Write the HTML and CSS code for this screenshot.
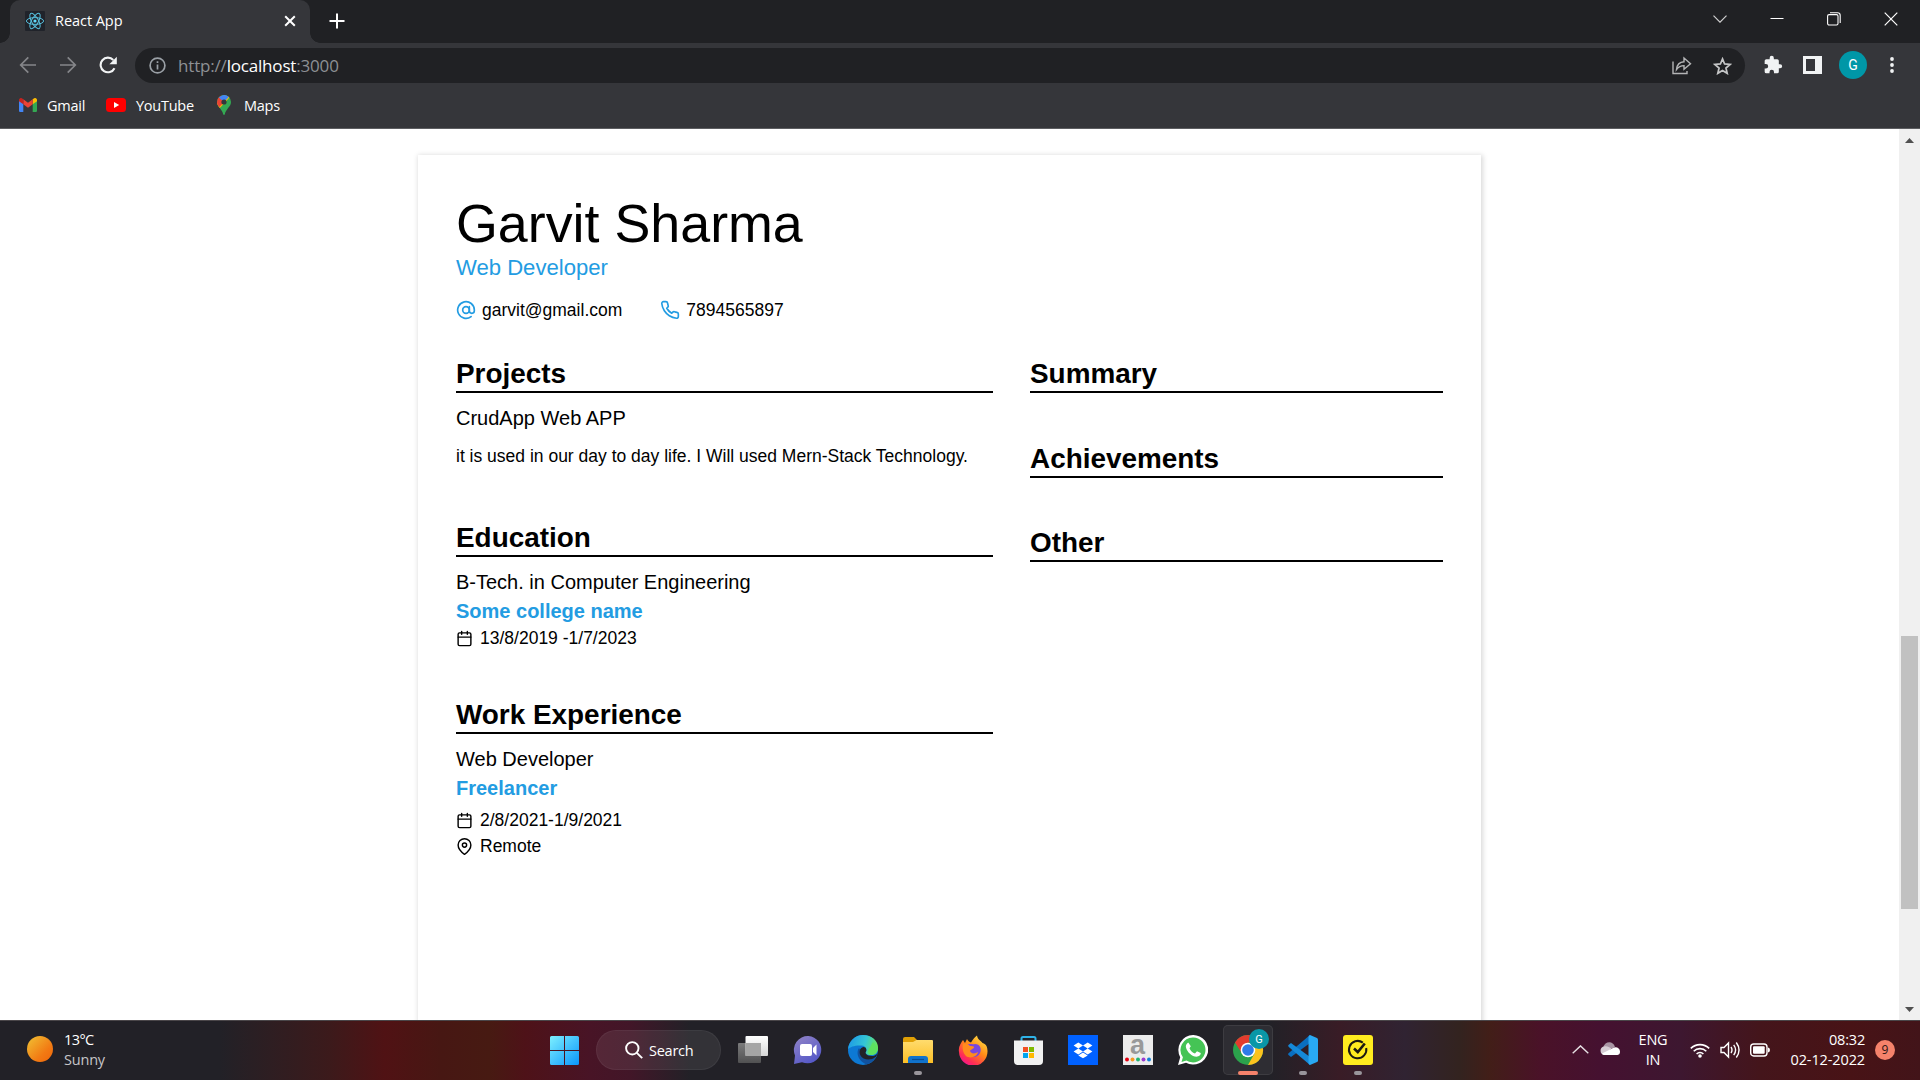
FILE: index.html
```html
<!DOCTYPE html>
<html lang="en">
<head>
<meta charset="utf-8">
<title>React App</title>
<link rel="stylesheet" href="styles.css">
</head>
<body>
<div class="screen">
  <header class="browser">
    <div class="tabstrip">
      <div class="tab">
        <svg class="favicon" width="20" height="20" viewBox="0 0 20 20" fill="none" stroke="#61dafb" stroke-width="1"><rect width="20" height="20" rx="1" fill="#20232a" stroke="none"/><g opacity=".85"><ellipse cx="10" cy="10" rx="8.6" ry="3.4"/><ellipse cx="10" cy="10" rx="8.6" ry="3.4" transform="rotate(60 10 10)"/><ellipse cx="10" cy="10" rx="8.6" ry="3.4" transform="rotate(120 10 10)"/></g><circle cx="10" cy="10" r="1.6" fill="#61dafb" stroke="none"/></svg>
        <span class="tab-title">React App</span>
        <svg class="tab-close" width="12" height="12" viewBox="0 0 12 12" stroke="#fff" stroke-width="2"><path d="M1.2 1.2l9.6 9.6M10.8 1.2l-9.6 9.6"/></svg>
      </div>
      <svg class="new-tab" width="16" height="16" viewBox="0 0 16 16" stroke="#fff" stroke-width="2"><path d="M8 .5v15M.5 8h15"/></svg>
      <div class="window-buttons">
        <svg width="14" height="8" viewBox="0 0 14 8" fill="none" stroke="#cfcfd0" stroke-width="1.2"><path d="M.5.7L7 7.2 13.500.7"/></svg>
        <svg width="14" height="14" viewBox="0 0 14 14" stroke="#fff"><path d="M.5 6.500h13"/></svg>
        <svg width="14" height="14" viewBox="0 0 14 14" fill="none" stroke="#fff" stroke-width="1.100"><rect x=".6" y="2.600" width="10.400" height="10.400" rx="1.500"/><path d="M3 .8h7.500a2.700 2.700 0 0 1 2.700 2.700V11"/></svg>
        <svg width="14" height="14" viewBox="0 0 14 14" stroke="#fff" stroke-width="1.200"><path d="M.7.7l12.600 12.600M13.300.7L.7 13.300"/></svg>
      </div>
    </div>
    <div class="toolbar">
      <svg class="nav-icon" width="18" height="18" viewBox="0 0 18 18" fill="none" stroke="#85868a" stroke-width="1.700"><path d="M17 9H2M9.300 1.400L1.700 9l7.600 7.600"/></svg>
      <svg class="nav-icon" width="18" height="18" viewBox="0 0 18 18" fill="none" stroke="#85868a" stroke-width="1.700"><path d="M1 9h15M8.700 1.400L16.300 9l-7.600 7.600"/></svg>
      <svg class="nav-icon" width="18" height="18" viewBox="0 0 18 18"><path d="M15.500 12.200A7.300 7.300 0 1 1 14.300 4" fill="none" stroke="#f1f3f4" stroke-width="2.100"/><path d="M17.800.8v7.400h-7.400z" fill="#f1f3f4"/></svg>
      <div class="omnibox">
        <svg width="17" height="17" viewBox="0 0 17 17" fill="none" stroke="#9aa0a6" stroke-width="1.700"><circle cx="8.500" cy="8.500" r="7.400"/><path d="M8.500 7.500v5M8.500 4.300v1.700"/></svg>
        <span class="url">http://<b>localhost</b>:3000</span>
        <svg class="share" width="20" height="19" viewBox="0 0 20 19" fill="none" stroke="#b4b5b6" stroke-width="1.400"><path d="M1 5.500v12h14V15"/><path d="M4.500 13.500c.5-5 3.500-7.500 7.500-7.700V2l6.500 5.700-6.500 5.500V9.600c-3.500 0-5.500 1.200-7.500 3.900z"/></svg>
        <svg width="19" height="18" viewBox="0 0 24 23" fill="none" stroke="#c5c6c7" stroke-width="2.200"><path d="M12 2.500l2.700 6.400 7 .6-5.300 4.600 1.600 6.800-6-3.600-6 3.600 1.600-6.800-5.300-4.600 7-.6z"/></svg>
      </div>
      <svg class="puzzle" width="20" height="20" viewBox="0 0 24 24" fill="#f1f3f4"><path d="M20.500 11H19V7a2 2 0 0 0-2-2h-4V3.500a2.500 2.500 0 0 0-5 0V5H4a2 2 0 0 0-2 2v3.800h1.500a2.700 2.700 0 0 1 0 5.400H2V20a2 2 0 0 0 2 2h3.800v-1.500a2.700 2.700 0 0 1 5.400 0V22H17a2 2 0 0 0 2-2v-4h1.500a2.500 2.500 0 0 0 0-5z"/></svg>
      <svg class="panel" width="19" height="18" viewBox="0 0 19 18"><path d="M0 0h19v18H0zM3 3v12h9V3z" fill="#f1f3f4" fill-rule="evenodd"/></svg>
      <span class="avatar">G</span>
      <svg class="dots" width="4" height="16" viewBox="0 0 4 16" fill="#f1f3f4"><circle cx="2" cy="2" r="1.900"/><circle cx="2" cy="8" r="1.900"/><circle cx="2" cy="14" r="1.900"/></svg>
    </div>
    <nav class="bookmarks">
      <span class="bookmark gmail"><svg width="18" height="14" viewBox="0 0 18 14"><path d="M0 2v10.700C0 13.400.6 14 1.300 14h3V5z" fill="#4285f4"/><path d="M13.700 5v9h3c.7 0 1.300-.6 1.300-1.300V2z" fill="#34a853"/><path d="M13.700 1.300v5L18 3.200V2c0-1.700-1.900-2.600-3.200-1.600z" fill="#fbbc04"/><path d="M4.300 6.300v-5L9 4.800l4.700-3.500v5L9 9.800z" fill="#ea4335"/><path d="M0 2v1.200l4.300 3.100v-5L3.200.4C1.900-.6 0 .3 0 2z" fill="#c5221f"/></svg>Gmail</span>
      <span class="bookmark youtube"><svg width="20" height="14" viewBox="0 0 20 14"><rect width="20" height="14" rx="3.500" fill="#f00"/><path d="M8 4v6l5.200-3z" fill="#fff"/></svg>YouTube</span>
      <span class="bookmark maps"><svg width="14" height="20" viewBox="0 0 14 20"><defs><clipPath id="pin"><path d="M7 0a7 7 0 0 1 7 7c0 5-5 6.500-6.200 12.300-.2.900-1.400.9-1.600 0C5 13.500 0 12 0 7a7 7 0 0 1 7-7z"/></clipPath></defs><g clip-path="url(#pin)"><path d="M0 0h14v20H0z" fill="#34a853"/><path d="M1 15L13 2 7 0 0 8z" fill="#fbbc04"/><path d="M0 9.500V0h4L7 7l-4.500 5z" fill="#ea4335"/><path d="M1.800 2.500L7 7l5.700-6L7-1z" fill="#4285f4"/></g><circle cx="7" cy="7" r="2.600" fill="#35363a"/></svg>Maps</span>
    </nav>
  </header>

  <main class="viewport">
    <div class="page">
      <article class="resume">
        <h1>Garvit Sharma</h1>
        <p class="role">Web Developer</p>
        <div class="contacts">
          <span class="contact"><svg class="feather" width="20" height="20" viewBox="0 0 24 24"><circle cx="12" cy="12" r="4"/><path d="M16 8v5a3 3 0 0 0 6 0v-1a10 10 0 1 0-3.920 7.940"/></svg>garvit@gmail.com</span>
          <span class="contact"><svg class="feather" width="20" height="20" viewBox="0 0 24 24"><path d="M22 16.920v3a2 2 0 0 1-2.180 2 19.790 19.790 0 0 1-8.630-3.070 19.500 19.500 0 0 1-6-6 19.790 19.790 0 0 1-3.070-8.670A2 2 0 0 1 4.110 2h3a2 2 0 0 1 2 1.720 12.840 12.840 0 0 0 .7 2.810 2 2 0 0 1-.45 2.110L8.090 9.910a16 16 0 0 0 6 6l1.270-1.270a2 2 0 0 1 2.110-.45 12.840 12.840 0 0 0 2.810.7A2 2 0 0 1 22 16.920z"/></svg>7894565897</span>
        </div>
        <div class="columns">
          <div class="main-column">
            <section class="projects">
              <h2>Projects</h2>
              <p class="item-title">CrudApp Web APP</p>
              <p class="overview">it is used in our day to day life. I Will used Mern-Stack Technology.</p>
            </section>
            <section class="education">
              <h2>Education</h2>
              <p class="item-title">B-Tech. in Computer Engineering</p>
              <p class="subtitle">Some college name</p>
              <p class="detail"><svg class="feather" width="17" height="17" viewBox="0 0 24 24"><rect x="3" y="4" width="18" height="18" rx="2"/><path d="M16 2v4M8 2v4M3 10h18"/></svg>13/8/2019 -1/7/2023</p>
            </section>
            <section class="work">
              <h2>Work Experience</h2>
              <p class="item-title">Web Developer</p>
              <p class="subtitle">Freelancer</p>
              <p class="detail"><svg class="feather" width="17" height="17" viewBox="0 0 24 24"><rect x="3" y="4" width="18" height="18" rx="2"/><path d="M16 2v4M8 2v4M3 10h18"/></svg>2/8/2021-1/9/2021</p>
              <p class="detail"><svg class="feather" width="17" height="17" viewBox="0 0 24 24"><path d="M21 10c0 7-9 13-9 13s-9-6-9-13a9 9 0 0 1 18 0z"/><circle cx="12" cy="10" r="3"/></svg>Remote</p>
            </section>
          </div>
          <div class="side-column">
            <section><h2>Summary</h2></section>
            <section><h2>Achievements</h2></section>
            <section><h2>Other</h2></section>
          </div>
        </div>
      </article>
    </div>
    <div class="scrollbar">
      <svg width="9" height="5" viewBox="0 0 9 5"><path d="M4.500 0L9 5H0z" fill="#505050"/></svg>
      <div class="track"><div class="thumb"></div></div>
      <svg width="9" height="5" viewBox="0 0 9 5"><path d="M4.500 5L9 0H0z" fill="#505050"/></svg>
    </div>
  </main>

  <footer class="taskbar">
    <div class="weather">
      <span class="sun"></span>
      <div class="lines"><span>13°C</span><span class="dim">Sunny</span></div>
    </div>
    <div class="apps">
      <svg class="start" width="29" height="29" viewBox="0 0 29 29"><defs><linearGradient id="win" x1="0" y1="0" x2="1" y2="1"><stop offset="0" stop-color="#7df0ff"/><stop offset="1" stop-color="#0a95fb"/></linearGradient></defs><path d="M0 1.500Q0 0 1.500 0H14v14H0zM15 0h12.500Q29 0 29 1.500V14H15zM0 15h14v14H1.500Q0 29 0 27.500zM15 15h14v12.500q0 1.500-1.500 1.500H15z" fill="url(#win)"/></svg>
      <div class="search"><svg width="18" height="18" viewBox="0 0 18 18" fill="none" stroke="#fff" stroke-width="1.900"><circle cx="7.300" cy="7.300" r="6.200"/><path d="M11.800 11.800l5.400 5.400"/></svg>Search</div>
      <span class="app"><svg width="30" height="30" viewBox="0 0 30 30"><defs><linearGradient id="tv" x1="0" y1="0" x2="0" y2="1"><stop offset="0" stop-color="#fff"/><stop offset="1" stop-color="#d6d6d6"/></linearGradient><linearGradient id="tg" x1="0" y1="0" x2="0" y2="1"><stop offset="0" stop-color="#7b7b7c"/><stop offset="1" stop-color="#515152"/></linearGradient></defs><rect y="8" width="23" height="20" rx="1" fill="url(#tg)"/><rect x="7.500" y="1" width="22.500" height="20" rx="1" fill="url(#tv)"/><path d="M7.500 8H23v13H7.500z" fill="#a5a5a5"/></svg></span>
      <span class="app"><svg width="30" height="30" viewBox="0 0 30 30"><defs><linearGradient id="chat" x1="0" y1="0" x2=".6" y2="1"><stop offset="0" stop-color="#9385c6"/><stop offset="1" stop-color="#5558c8"/></linearGradient></defs><path d="M15.500 1A13.700 13.700 0 1 1 9 27.200L1 29l1-8.500A14 14 0 0 1 15.500 1z" fill="url(#chat)"/><rect x="7" y="9" width="12" height="12" rx="2" fill="#fff"/><path d="M20 13l3.500-3.500v11L20 17z" fill="#fff"/></svg></span>
      <span class="app"><svg width="30" height="30" viewBox="0 0 30 30"><defs><linearGradient id="edge" x1="0" y1=".4" x2="1" y2=".6"><stop offset="0" stop-color="#1e9be6"/><stop offset=".55" stop-color="#35c6d4"/><stop offset="1" stop-color="#6eea4c"/></linearGradient></defs><circle cx="15" cy="15" r="15" fill="#0d79d4"/><path d="M0 14C1 6 7.500 0 15 0c9 0 15 6 15 12.500 0 5-4 7.500-7.500 7.500s-5.500-1.500-4.500-3 .9-6-4.500-6.500C7 10 2 12 0 14z" fill="url(#edge)"/><path d="M10.500 13.500C7.500 20 12 27 18.500 29.500c4-.8 7.500-4 9.300-7.500-4 2.300-9 2.300-12-.2-2.300-2-2.500-5-.8-7.300z" fill="#11529f"/><path d="M30 16c0 3-3 5-6 5s-5.200-.8-6-2.200c-1.300-1.600.6-2 .3-4.300-.3-2-2-2.700-3.600-2.300-3 1-3.800 5-2.200 8.300 2.500 4.500 10 5.500 15.300 1.500C29 20.500 30 18 30 16z" fill="#222127"/><path d="M20 15.800c0 3 2 4.500 4.500 4.200 3.500-.4 5.500-3 5.500-7l-5-6z" fill="#5de25f"/></svg></span>
      <span class="app running"><svg width="30" height="30" viewBox="0 0 30 30"><defs><linearGradient id="fold" x1="0" y1="0" x2="0" y2="1"><stop offset="0" stop-color="#ffdc6e"/><stop offset="1" stop-color="#fcbf26"/></linearGradient></defs><path d="M0 4q0-2 2-2h9l3 3v5H0z" fill="#e0a005"/><path d="M0 7h10l3.500-2H29q1 0 1 1v22H0z" fill="url(#fold)"/><path d="M5 28v-4q0-3 3-3h14q3 0 3 3v4z" fill="#1173cc"/><path d="M9 24.500h12" stroke="#0a4d92" stroke-width="1.200"/></svg></span>
      <span class="app"><svg width="30" height="30" viewBox="0 0 30 30"><defs><linearGradient id="fox" x1=".9" y1="0" x2=".2" y2="1"><stop offset="0" stop-color="#ffe94a"/><stop offset=".45" stop-color="#ff8a16"/><stop offset=".8" stop-color="#ff2c56"/><stop offset="1" stop-color="#f0119b"/></linearGradient></defs><path d="M5 5l2 3 2-4c1 2 2 3 4 3.500C15 4 17 2 19 .5c.5 4 3.500 5 5.500 7.500 4 1 5 4.500 5 8A14 14 0 0 1 1 17C0 12 3 8 5 5z" fill="url(#fox)"/><path d="M9 10c3-2 5 0 8-1 5 0 7 5 5 9-2 5-8 5-11 2-2-2-3-5-2-10z" fill="#7947dd"/><path d="M5 9c3-1 5 0 7 2 2 0 4 0 4 1 0 2-3 2-4 4 1 3 5 3 8 1-1 5-8 7-12 4C5 18 4 13 5 9z" fill="#ff8b1d"/></svg></span>
      <span class="app"><svg width="30" height="30" viewBox="0 0 30 30"><path d="M8.500 7V3.500q0-1.500 1.500-1.500h11q1.500 0 1.500 1.500V7" fill="none" stroke="#2fb3e8" stroke-width="2"/><path d="M1 5.500h29V26q0 4-4 4H5q-4 0-4-4z" fill="#f1f1f1"/><path d="M10 12h5v5h-5z" fill="#f25022"/><path d="M16 12h5v5h-5z" fill="#7fba00"/><path d="M10 18h5v5h-5z" fill="#00a4ef"/><path d="M16 18h5v5h-5z" fill="#ffb900"/></svg></span>
      <span class="app"><svg width="30" height="30" viewBox="0 0 30 30"><path d="M0 0h30v30H0z" fill="#0061ff"/><path d="M10.300 7.500l4.700 3-4.700 3-4.700-3zm9.400 0l4.700 3-4.700 3-4.700-3zM10.300 13.500l4.700 3-4.700 3-4.700-3zm9.400 0l4.700 3-4.700 3-4.700-3zM15 17.500l4.700 3-4.700 2.800-4.700-2.800z" fill="#fff"/></svg></span>
      <span class="app"><svg class="amazon" width="30" height="30" viewBox="0 0 30 30"><path d="M0 0h30v30H0z" fill="#ececec"/><text class="amazon-a" x="14.500" y="19" text-anchor="middle">a</text><circle cx="4" cy="24.500" r="2" fill="#e60012"/><circle cx="9.500" cy="24.500" r="2" fill="#f59b23"/><circle cx="15" cy="24.500" r="2" fill="#22b573"/><circle cx="20.500" cy="24.500" r="2" fill="#9a3bd0"/><circle cx="26" cy="24.500" r="2" fill="#1280d8"/></svg></span>
      <span class="app"><svg width="30" height="30" viewBox="0 0 30 30"><path d="M15 0a15 14.800 0 1 1-7 27.800L0 30l2.200-7.800A15 15 0 0 1 15 0z" fill="#fff"/><path d="M15 2.400a12.500 12.500 0 1 1-6.500 23.200L3.500 27l1.400-4.800A12.500 12.500 0 0 1 15 2.400z" fill="#45c455"/><path d="M10.500 7.800c-.6-.2-3.200 1.500-2.500 4.700 1 4.500 6 9.300 10.500 9.300 2.500 0 4.500-2 4.200-3.700l-3.700-1.900-2 2.200c-2.500-.8-4.600-2.800-5.500-5.200l1.300-1.900z" fill="#fff"/></svg></span>
      <span class="app active"><svg width="36" height="36" viewBox="0 0 36 36"><circle cx="15" cy="21" r="15" fill="#2ba24c"/><path d="M2 13.500A15 15 0 0 1 28 13.500H15L9 24.500z" fill="#e33b2e"/><path d="M28 13.500A15 15 0 0 1 15 36l6.500-11.500L20 13.500z" fill="#fcc31e"/><circle cx="15" cy="21" r="7.300" fill="#fff"/><circle cx="15" cy="21" r="5.800" fill="#2f7be9"/><circle cx="26" cy="10" r="10" fill="#0997a7"/><text class="badge-g" x="26" y="14" text-anchor="middle">G</text></svg></span>
      <span class="app running"><svg width="30" height="30" viewBox="0 0 30 30"><path d="M22 0v8L3 22 .5 20q-.8-1 .3-2z" fill="#0a6fc0"/><path d="M22 30v-8L3 8 .5 10q-.8 1 .3 2z" fill="#1589d8"/><path d="M22 0l7 3q1 .6 1 1.500v21q0 1-1 1.500l-7 3q-1.500-.5-1.500-2V2q0-1.500 1.500-2z" fill="#29a9f3"/></svg></span>
      <span class="app running"><svg width="30" height="30" viewBox="0 0 30 30" fill="none" stroke="#1c1a12"><rect width="30" height="30" rx="3" fill="#ffec1f" stroke="none"/><path d="M19.800 7.600A8.700 8.700 0 1 0 23.200 13" stroke-width="2"/><path d="M11 13.500l3.800 3.500 7-8.500" stroke-width="2.600"/></svg></span>
    </div>
    <div class="tray">
      <svg class="chevron" width="17" height="9" viewBox="0 0 17 9" fill="none" stroke="#e6e0e3" stroke-width="1.400"><path d="M.7 8.300L8.500.9l7.800 7.400"/></svg>
      <svg class="cloud" width="20" height="14" viewBox="0 0 20 14"><path d="M3 5.500C5-1 13-1.500 15 5c-3 2-8 3-12 .5z" fill="#a995a4"/><path d="M4 4.500c3-1 5 .5 7.500 2L4.500 13A4.300 4.300 0 0 1 4 4.500z" fill="#d6ccd4"/><path d="M2 11.500L13 6c3-2 7 0 7 3.500S18 13 16 13H4q-1.500-.3-2-1.500z" fill="#fff"/></svg>
      <div class="lines language"><span>ENG</span><span>IN</span></div>
      <svg class="wifi" width="20" height="16" viewBox="0 0 20 16" fill="none" stroke="#fff" stroke-width="1.600"><path d="M.8 6.400a13 13 0 0 1 18.400 0M3.700 9.200a9 9 0 0 1 12.600 0M6.600 12a5 5 0 0 1 6.800 0"/><circle cx="10" cy="14" r="1.800" fill="#fff" stroke="none"/></svg>
      <svg class="volume" width="21" height="18" viewBox="0 0 21 18" fill="none" stroke="#fff" stroke-width="1.400"><path d="M1 6.500h3L8.500 2v14L4 11.500H1zM11 6q2 3 0 6M13.700 3.800q3.800 5.200 0 10.400M16.300 1.500q5.500 7.500 0 15"/></svg>
      <svg class="battery" width="20" height="14" viewBox="0 0 20 14"><rect x=".7" y="1" width="16.300" height="12" rx="3" fill="none" stroke="#fff" stroke-width="1.400"/><rect x="3" y="3.300" width="11.700" height="7.400" rx="1" fill="#fff"/><path d="M18 4.500q2 .3 2 2.500t-2 2.500z" fill="#fff"/></svg>
      <div class="lines clock"><span>08:32</span><span class="date">02-12-2022</span></div>
      <span class="count">9</span>
    </div>
  </footer>
</div>
</body>
</html>
```
FILE: styles.css
```css
* { box-sizing: border-box; margin: 0; padding: 0; }
body { width: 1920px; height: 1080px; overflow: hidden; background: #fff; }
svg { display: block; flex: none; }
.screen { display: flex; flex-direction: column; width: 1920px; height: 1080px; }
.browser, .taskbar { font-family: "Open Sans", "Noto Sans", sans-serif; color: #fff; white-space: nowrap; }

.browser { height: 129px; background: #35363a; border-bottom: 1px solid #5d5e61; flex: none; }
.tabstrip { display: flex; height: 43px; background: #202124; padding-left: 10px; }
.tab { position: relative; display: flex; align-items: center; width: 300px; height: 43px; padding: 0 15px 1px; background: #35363a; border-radius: 10px 10px 0 0; }
.tab::before, .tab::after { content: ""; position: absolute; bottom: 0; width: 10px; height: 10px; }
.tab::before { left: -10px; background: radial-gradient(circle at 0 0, transparent 9.500px, #35363a 10px); }
.tab::after { right: -10px; background: radial-gradient(circle at 100% 0, transparent 9.500px, #35363a 10px); }
.tab-title { margin-left: 10px; font-size: 14.500px; letter-spacing: -.05px; line-height: 20px; }
.tab-close { margin-left: auto; margin-right: -1px; }
.new-tab { margin: 13px 0 0 19px; }
.window-buttons { display: flex; align-items: center; gap: 43px; margin-left: auto; padding: 0 22px 6px 0; }

.toolbar { display: flex; align-items: center; height: 44px; padding: 0 26px 0 19px; }
.nav-icon { margin-right: 22px; }
.nav-icon:nth-child(3) { margin-right: 18px; }
.omnibox { display: flex; align-items: center; width: 1610px; height: 35px; margin-top: 1px; padding: 0 13px 0 14px; border-radius: 18px; background: #202124; }
.url { margin-left: 12px; font-size: 17px; letter-spacing: -.18px; line-height: 24px; color: #8d9094; }
.url b { font-weight: 400; color: #fff; }
.share { margin: 0 21px 0 auto; }
.puzzle { margin-left: 18px; }
.panel { margin-left: 20px; }
.avatar { width: 28px; height: 28px; margin-left: 17px; border-radius: 50%; background: #0097a7; font: 14px/28px Roboto, sans-serif; text-align: center; }
.dots { margin-left: 23px; }

.bookmarks { display: flex; align-items: center; height: 36px; padding-left: 19px; font-size: 14.500px; }
.bookmark { display: flex; align-items: center; letter-spacing: -.25px; }
.gmail { gap: 10px; width: 87px; }
.youtube { gap: 10px; width: 111px; }
.maps { gap: 13px; }

.viewport { display: flex; height: 891px; overflow: hidden; flex: none; }
.page { width: 1899px; padding: 26px 0 0 418px; }
.resume { width: 1063px; height: 1500px; padding: 36px 38px; box-shadow: 1px 1px 5px 1px rgba(0, 0, 0, .15); background: #fff; color: #000; font-family: "Liberation Sans", Arial, sans-serif; font-size: 17.500px; white-space: nowrap; }
h1 { font-size: 53.800px; font-weight: 400; line-height: 64px; }
.role { font-size: 22.100px; line-height: 26px; color: #239ce2; }
.contacts { display: flex; gap: 38px; height: 20px; margin-top: 19px; }
.contact { display: flex; gap: 6px; line-height: 20px; }
.contact .feather { stroke: #239ce2; }
.feather { fill: none; stroke: #000; stroke-width: 2; stroke-linecap: round; stroke-linejoin: round; }
.columns { display: grid; grid-template-columns: 537px 413px; gap: 37px; margin-top: 39px; }
h2 { height: 34px; border-bottom: 2px solid #000; font-size: 27.900px; font-weight: 700; line-height: 30px; }
.item-title { margin-top: 13px; font-size: 20px; line-height: 24px; }
.overview { margin-top: 16px; line-height: 20px; }
.projects { height: 164px; }
.education { height: 177px; }
.subtitle { margin-top: 5px; font-size: 20px; font-weight: 700; line-height: 24px; color: #239ce2; }
.detail { display: flex; align-items: center; gap: 7px; margin-top: 5px; line-height: 20px; }
.detail .feather { margin-top: 1px; }
.work .detail { margin-top: 10px; }
.work .detail + .detail { margin-top: 6px; }
.side-column section { margin-bottom: 50.500px; }
.scrollbar { display: flex; flex-direction: column; align-items: center; width: 21px; padding: 9px 0 8px; background: #f0f0f0; }
.track { flex: 1; padding-top: 493px; }
.thumb { width: 17px; height: 273px; background: #c1c1c1; }

.taskbar { display: grid; grid-template-columns: 550px 1fr 350px; height: 60px; border-top: 1px solid #4a4649; background: linear-gradient(90deg, #222127 0, #222127 220px, #2e1e22 270px, #3c1a1b 330px, #501214 385px, #471713 440px, #471a12 490px, #4e1218 525px, #481426 590px, #421628 630px, #222127 690px, #222127 1270px, #391c26 1340px, #302332 1405px, #33231f 1460px, #421e18 1490px, #4a1228 1540px, #451130 1600px, #3d1730 1680px, #44151b 1760px, #481316 1850px, #421419 1920px); }
.weather { display: flex; padding-left: 27px; }
.sun { width: 26px; height: 26px; margin-top: 15px; border-radius: 50%; background: linear-gradient(135deg, #f0c334, #f27a13 65%, #ef650b); }
.lines { display: flex; flex-direction: column; padding-top: 9px; font-size: 14.500px; line-height: 20px; letter-spacing: -.2px; }
.weather .lines { margin-left: 11px; }
.weather .lines span:first-child { letter-spacing: -.6px; }
.dim { color: #c6c5c8; }
.apps { display: flex; align-items: center; height: 58px; }
.search { display: flex; align-items: center; gap: 6px; width: 125px; height: 40px; margin: 0 4px 0 17px; padding-left: 28px; border-radius: 20px; background: rgba(255, 255, 255, .08); border: 1px solid rgba(255, 255, 255, .05); font-size: 14.500px; letter-spacing: -.25px; }
.app { position: relative; display: flex; align-items: center; justify-content: center; width: 55px; height: 50px; flex: none; }
.running::after, .active::after { content: ""; position: absolute; bottom: 0; left: 24px; width: 8px; height: 4px; border-radius: 2px; background: #99959b; }
.active { width: 50px; margin: 0 2.500px; padding: 0 0 6px 6px; border-radius: 5px; background: #2e2d33; box-shadow: inset 0 0 0 1px #3d3c41; }
.active::after { left: 15px; width: 20px; background: #f5826b; }
.amazon { overflow: visible; }
.amazon-a { font: bold 27px "Liberation Sans", sans-serif; fill: #999; }
.badge-g { font: 11px Roboto, sans-serif; fill: #fff; }
.tray { display: flex; align-items: flex-start; padding-left: 2px; }
.chevron { margin-top: 24px; }
.cloud { margin: 21px 0 0 11px; }
.language { width: 30px; margin-left: 18px; align-items: center; }
.wifi { margin: 21px 0 0 22px; }
.volume { margin: 20px 0 0 10px; }
.battery { margin: 22px 0 0 9px; }
.clock { width: 80px; margin-left: 15px; align-items: flex-end; }
.date { letter-spacing: -.12px; }
.count { width: 20px; height: 20px; margin: 19px 0 0 10px; border-radius: 50%; background: #f5826b; color: #2a1414; font-size: 12px; line-height: 20px; text-align: center; }
```
